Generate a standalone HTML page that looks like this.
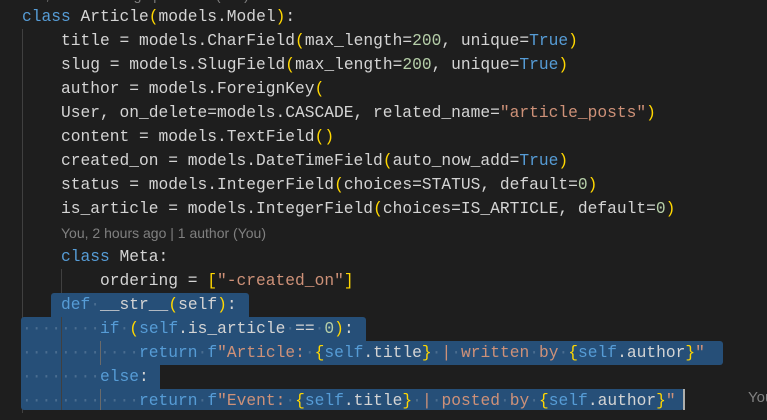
<!DOCTYPE html>
<html><head><meta charset="utf-8"><style>
body{margin:0;width:767px;height:420px;background:#1e1e1e;overflow:hidden;position:relative;font-family:"Liberation Mono",monospace;font-size:16.25px;color:#d4d4d4}
.l{position:absolute;left:22px;height:24px;line-height:24px;white-space:pre}
.k{color:#569cd6}.s{color:#ce9178}.n{color:#b5cea8}.y{color:#ffd700}.p{color:#da70d6}
.d{color:#4a6d90}
.sel{position:absolute;background:#264f78}
.blame{position:absolute;font-family:"Liberation Sans",sans-serif;font-size:14px;color:#808080;line-height:24px;white-space:pre}
.g{position:absolute;width:1px;background:#404040}
</style></head><body>
<div class="blame" style="left:22px;top:-17px">You, 15 minutes ago | 1 author (You)</div>
<div class="g" style="left:22px;top:29px;height:384px"></div>
<div class="g" style="left:61px;top:269px;height:24px"></div>
<div class="sel" style="left:51px;top:293px;width:198px;height:24px;border-radius:3px 3px 0 0"></div>
<div class="sel" style="left:21px;top:317px;width:345px;height:24px;border-radius:3px 3px 0 0"></div>
<div class="sel" style="left:21px;top:341px;width:702px;height:24px;border-radius:0 3px 3px 0"></div>
<div class="sel" style="left:21px;top:365px;width:139px;height:24px"></div>
<div class="sel" style="left:21px;top:389px;width:663px;height:21px;border-radius:0 0 3px 3px"></div>
<div class="g" style="left:61px;top:317px;height:93px"></div>
<div class="g" style="left:100px;top:341px;height:24px;background:#6a6a6a"></div>
<div class="g" style="left:100px;top:389px;height:21px;background:#6a6a6a"></div>
<div style="position:absolute;left:683px;top:389px;width:2px;height:21px;background:#aeafad"></div>
<div class="l" style="top:5px"><span class="k">class</span> Article<span class="y">(</span>models.Model<span class="y">)</span>:</div>
<div class="l" style="top:29px">    title = models.CharField<span class="y">(</span>max_length=<span class="n">200</span>, unique=<span class="k">True</span><span class="y">)</span></div>
<div class="l" style="top:53px">    slug = models.SlugField<span class="y">(</span>max_length=<span class="n">200</span>, unique=<span class="k">True</span><span class="y">)</span></div>
<div class="l" style="top:77px">    author = models.ForeignKey<span class="y">(</span></div>
<div class="l" style="top:101px">    User, on_delete=models.CASCADE, related_name=<span class="s">"article_posts"</span><span class="y">)</span></div>
<div class="l" style="top:125px">    content = models.TextField<span class="y">()</span></div>
<div class="l" style="top:149px">    created_on = models.DateTimeField<span class="y">(</span>auto_now_add=<span class="k">True</span><span class="y">)</span></div>
<div class="l" style="top:173px">    status = models.IntegerField<span class="y">(</span>choices=STATUS, default=<span class="n">0</span><span class="y">)</span></div>
<div class="l" style="top:197px">    is_article = models.IntegerField<span class="y">(</span>choices=IS_ARTICLE, default=<span class="n">0</span><span class="y">)</span></div>
<div class="blame" style="left:61px;top:221px">You, 2 hours ago | 1 author (You)</div>
<div class="l" style="top:245px">    <span class="k">class</span> Meta:</div>
<div class="l" style="top:269px">        ordering = <span class="y">[</span><span class="s">"-created_on"</span><span class="y">]</span></div>
<div class="l" style="top:293px">    <span class="k">def</span><span class="d">·</span>__str__<span class="y">(</span>self<span class="y">)</span>:</div>
<div class="l" style="top:317px"><span class="d">········</span><span class="k">if</span><span class="d">·</span><span class="y">(</span><span class="k">self</span>.is_article<span class="d">·</span>==<span class="d">·</span><span class="n">0</span><span class="y">)</span>:</div>
<div class="l" style="top:341px"><span class="d">············</span><span class="k">return</span><span class="d">·</span><span class="k">f</span><span class="s">"Article:</span><span class="d">·</span><span class="y">{</span><span class="k">self</span>.title<span class="y">}</span><span class="d">·</span><span class="s">|</span><span class="d">·</span><span class="s">written</span><span class="d">·</span><span class="s">by</span><span class="d">·</span><span class="y">{</span><span class="k">self</span>.author<span class="y">}</span><span class="s">"</span></div>
<div class="l" style="top:365px"><span class="d">········</span><span class="k">else</span>:</div>
<div class="l" style="top:389px"><span class="d">············</span><span class="k">return</span><span class="d">·</span><span class="k">f</span><span class="s">"Event:</span><span class="d">·</span><span class="y">{</span><span class="k">self</span>.title<span class="y">}</span><span class="d">·</span><span class="s">|</span><span class="d">·</span><span class="s">posted</span><span class="d">·</span><span class="s">by</span><span class="d">·</span><span class="y">{</span><span class="k">self</span>.author<span class="y">}</span><span class="s">"</span></div>
<div class="blame" style="left:748px;top:386px;font-size:15px">You</div>
</body></html>
